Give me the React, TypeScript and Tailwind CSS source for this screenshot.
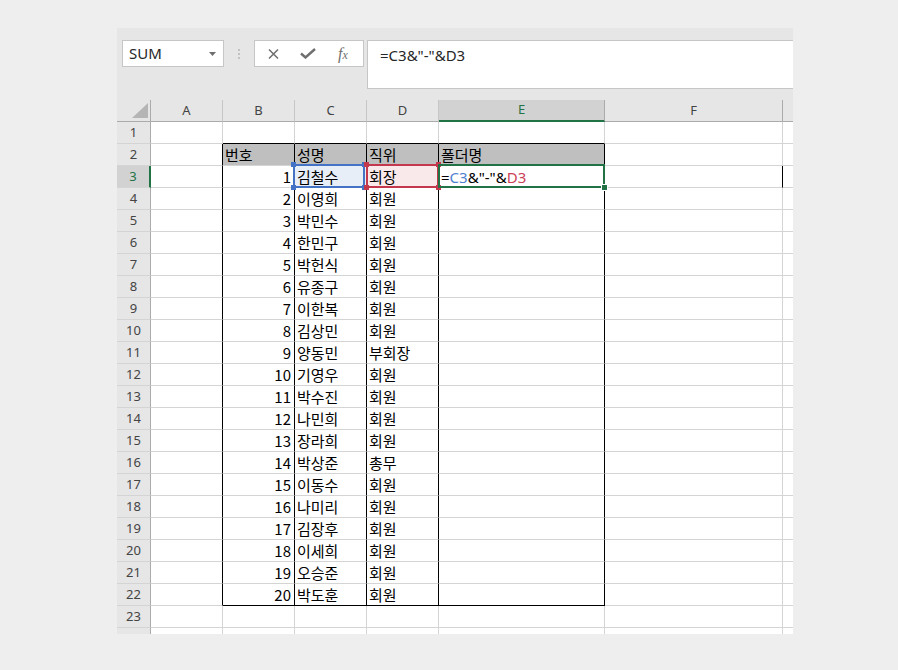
import React from 'react';

const DATA: [number, string, string][] = [
  [1, '김철수', '회장'],
  [2, '이영희', '회원'],
  [3, '박민수', '회원'],
  [4, '한민구', '회원'],
  [5, '박헌식', '회원'],
  [6, '유종구', '회원'],
  [7, '이한복', '회원'],
  [8, '김상민', '회원'],
  [9, '양동민', '부회장'],
  [10, '기영우', '회원'],
  [11, '박수진', '회원'],
  [12, '나민희', '회원'],
  [13, '장라희', '회원'],
  [14, '박상준', '총무'],
  [15, '이동수', '회원'],
  [16, '나미리', '회원'],
  [17, '김장후', '회원'],
  [18, '이세희', '회원'],
  [19, '오승준', '회원'],
  [20, '박도훈', '회원'],
];

// row 24 only peeks in at the bottom edge, so its label stays hidden
const ROWS = Array.from({ length: 24 }, (_, i) => i + 1);

function Handles({ color }: { color: string }) {
  return (
    <>
      <div className={`absolute left-[-2px] top-[-2px] size-[5px] ${color}`} />
      <div className={`absolute right-[-2px] top-[-2px] size-[5px] ${color}`} />
      <div className={`absolute bottom-[-2px] left-[-2px] size-[5px] ${color}`} />
      <div className={`absolute bottom-[-2px] right-[-2px] size-[5px] ${color}`} />
    </>
  );
}

function FormulaBar() {
  return (
    <div className="flex h-[72px] items-start pt-[12px] font-['Noto_Sans',sans-serif]">
      <div className="ml-[5px] flex h-[27px] w-[102px] items-center justify-between border border-[#c6c6c6] bg-white pl-[6px] pr-[7px]">
        <span className="text-[15px] leading-none text-[#262626]">SUM</span>
        <svg width="7" height="4" viewBox="0 0 7 4">
          <path d="M0 0h7L3.5 4z" fill="#6e6e6e" />
        </svg>
      </div>
      <div className="flex h-[27px] w-[30px] flex-col items-center justify-center gap-[2px]">
        <div className="size-[2px] bg-[#c2c2c2]" />
        <div className="size-[2px] bg-[#c2c2c2]" />
        <div className="size-[2px] bg-[#c2c2c2]" />
      </div>
      <div className="flex h-[27px] w-[110px] items-center border border-[#c6c6c6] bg-white pl-[13px]">
        <svg width="11" height="10" viewBox="0 0 11 10">
          <path d="M1 0.5L10 9.5M10 0.5L1 9.5" stroke="#6f6f6f" strokeWidth="1.5" />
        </svg>
        <svg className="ml-[21px]" width="16" height="11" viewBox="0 0 16 11">
          <path d="M1 5.5L5.5 9.5L15 1" stroke="#6f6f6f" strokeWidth="2.4" fill="none" />
        </svg>
        <span className="ml-[22px] font-['Liberation_Serif',serif] text-[16px] italic leading-none text-[#6f6f6f]">
          f<span className="text-[12px]">x</span>
        </span>
      </div>
      <div className="ml-[3px] h-[49px] flex-1 border-y border-l border-[#c6c6c6] bg-white">
        <div className="flex h-[28px] items-center pl-[12px] text-[15px] text-[#262626]">=C3&amp;"-"&amp;D3</div>
      </div>
    </div>
  );
}

function ColumnHeader() {
  const base = 'flex shrink-0 items-center justify-center border-b text-[13px]';
  return (
    <div className="flex h-[22px] font-['Noto_Sans',sans-serif]">
      <div className="relative w-[34px] shrink-0 border-r border-b border-[#ababab] bg-[#e6e6e6]">
        <svg className="absolute left-0 top-0" width="34" height="22" viewBox="0 0 34 22">
          <path d="M15 18H31V3z" fill="#b5b5b5" />
        </svg>
      </div>
      {['A', 'B', 'C', 'D'].map((c) => (
        <div key={c} className={`${base} w-[72px] border-r border-r-[#c6c6c6] border-b-[#ababab] bg-[#e6e6e6] text-[#444]`}>
          {c}
        </div>
      ))}
      <div className={`${base} w-[166px] border-r border-r-[#ababab] border-b-2 border-b-[#217346] bg-[#d2d2d2] text-[#217346]`}>E</div>
      <div className={`${base} w-[178px] border-r border-r-[#ababab] border-b-[#ababab] bg-[#e6e6e6] text-[#444]`}>F</div>
      <div className="w-[10px] shrink-0 border-b border-b-[#ababab] bg-[#e6e6e6]" />
    </div>
  );
}

function GridRow({ r }: { r: number }) {
  const inTable = r >= 2 && r <= 22;
  const edge = r === 1 || r === 22;
  const head = r === 2;
  const sel = r === 3;
  const item = r >= 3 && r <= 22 ? DATA[r - 3] : null;

  const right = inTable ? 'border-r-black' : 'border-r-[#d4d4d4]';
  const bottom = edge ? 'border-b-black' : 'border-b-[#d4d4d4]';
  const fill = head ? 'bg-[#bfbfbf]' : 'bg-white';
  const cell = 'relative shrink-0 border-r border-b overflow-visible whitespace-nowrap leading-[21px]';

  return (
    <div className="flex h-[22px] font-['Noto_Sans_CJK_KR','Noto_Sans',sans-serif] text-[15px] text-black">
      <div
        className={`flex w-[34px] shrink-0 items-center justify-center border-b border-b-[#d4d4d4] font-['Noto_Sans',sans-serif] text-[13px] ${
          sel ? 'border-r-2 border-r-[#217346] bg-[#d2d2d2] text-[#217346]' : 'border-r border-r-[#ababab] bg-[#e6e6e6] text-[#444]'
        }`}
      >
        {r <= 23 ? r : null}
      </div>
      <div className={`${cell} w-[72px] border-b-[#d4d4d4] bg-white ${right}`} />
      <div className={`${cell} w-[72px] ${right} ${bottom} ${fill} ${head ? 'pl-[2px]' : 'pr-[3px] text-right'}`}>
        {head ? '번호' : item?.[0]}
      </div>
      <div className={`${cell} w-[72px] pl-[2px] ${right} ${bottom} ${sel ? 'bg-[#e8eef8]' : fill}`}>
        {head ? '성명' : item?.[1]}
        {sel && (
          <div className="absolute left-[-2px] top-[-2px] z-10 h-[24px] w-[72px]">
            <div className="absolute inset-0 border-2 border-[#4472c4]" />
            <Handles color="bg-[#4472c4]" />
          </div>
        )}
      </div>
      <div className={`${cell} w-[72px] pl-[2px] ${right} ${bottom} ${sel ? 'bg-[#f9e9eb]' : fill}`}>
        {head ? '직위' : item?.[2]}
        {sel && (
          <div className="absolute left-[-1px] top-[-2px] z-10 h-[24px] w-[73px]">
            <div className="absolute inset-0 border-2 border-[#c3384d]" />
            <Handles color="bg-[#c3384d]" />
          </div>
        )}
      </div>
      <div className={`${cell} w-[166px] pl-[2px] ${right} ${bottom} ${fill}`}>
        {head && '폴더명'}
        {sel && (
          <>
            <span className="font-['Noto_Sans',sans-serif]">
              =<span className="text-[#4f81d0]">C3</span>&amp;"-"&amp;<span className="text-[#cc3f58]">D3</span>
            </span>
            <div className="absolute left-[-1px] top-[-2px] z-10 h-[24px] w-[167px]">
              <div className="absolute inset-0 border-2 border-[#217346]" />
              <div className="absolute bottom-[-3px] right-[-3px] size-[7px] border border-white bg-[#217346]" />
            </div>
          </>
        )}
      </div>
      <div className={`${cell} w-[178px] border-b-[#d4d4d4] bg-white ${sel ? 'border-r-black' : 'border-r-[#d4d4d4]'}`} />
      <div className="w-[10px] shrink-0 border-b border-b-[#d4d4d4] bg-white" />
    </div>
  );
}

export default function App() {
  return (
    <div className="h-[670px] w-[898px] bg-[#eeeeee] pl-[117px] pt-[28px]">
      <div className="h-[606px] w-[676px] overflow-hidden bg-[#e6e6e6]">
        <FormulaBar />
        <ColumnHeader />
        {ROWS.map((r) => (
          <GridRow key={r} r={r} />
        ))}
      </div>
    </div>
  );
}
